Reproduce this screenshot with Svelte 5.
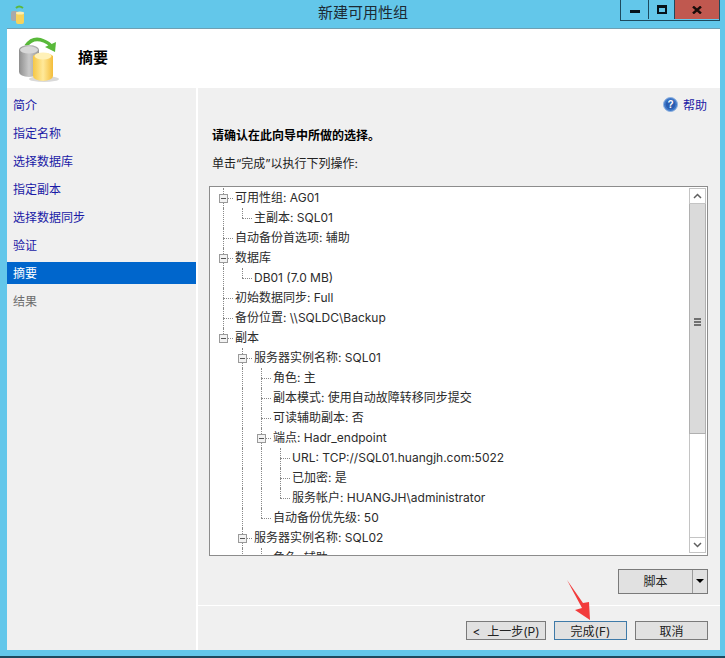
<script>
	const navItems = [
		{ label: '简介' },
		{ label: '指定名称' },
		{ label: '选择数据库' },
		{ label: '指定副本' },
		{ label: '选择数据同步' },
		{ label: '验证' },
		{ label: '摘要', active: true },
		{ label: '结果', disabled: true }
	];

	// depth = indent level, open = has a collapse box, guides = depths that keep a vertical line
	const rows = [
		{ depth: 0, open: true, text: '可用性组: AG01', guides: [0] },
		{ depth: 1, text: '主副本: SQL01', guides: [0], last: true },
		{ depth: 0, text: '自动备份首选项: 辅助', guides: [0] },
		{ depth: 0, open: true, text: '数据库', guides: [0] },
		{ depth: 1, text: 'DB01 (7.0 MB)', guides: [0], last: true },
		{ depth: 0, text: '初始数据同步: Full', guides: [0] },
		{ depth: 0, text: '备份位置: \\\\SQLDC\\Backup', guides: [0] },
		{ depth: 0, open: true, text: '副本', guides: [], last: true },
		{ depth: 1, open: true, text: '服务器实例名称: SQL01', guides: [1] },
		{ depth: 2, text: '角色: 主', guides: [1, 2] },
		{ depth: 2, text: '副本模式: 使用自动故障转移同步提交', guides: [1, 2] },
		{ depth: 2, text: '可读辅助副本: 否', guides: [1, 2] },
		{ depth: 2, open: true, text: '端点: Hadr_endpoint', guides: [1, 2] },
		{ depth: 3, text: 'URL: TCP://SQL01.huangjh.com:5022', guides: [1, 2, 3] },
		{ depth: 3, text: '已加密: 是', guides: [1, 2, 3] },
		{ depth: 3, text: '服务帐户: HUANGJH\\administrator', guides: [1, 2], last: true },
		{ depth: 2, text: '自动备份优先级: 50', guides: [1], last: true },
		{ depth: 1, open: true, text: '服务器实例名称: SQL02', guides: [1] },
		{ depth: 2, text: '角色: 辅助', guides: [1, 2] }
	];
</script>

<div class="window">
	<div class="titlebar">
		<svg class="app-icon" width="16" height="20" viewBox="0 0 16 20">
			<path d="M6 4 Q9 1 13 4" fill="none" stroke="#5cb83c" stroke-width="2" />
			<rect x="1" y="7" width="7" height="10" rx="2" fill="#a9a9a9" />
			<rect x="6" y="8" width="8" height="12" rx="2" fill="#f7d35c" />
			<ellipse cx="10" cy="9" rx="4" ry="1.5" fill="#fdeeb0" />
		</svg>
		<div class="title">新建可用性组</div>
		<div class="controls">
			<div class="ctl min"><span class="min-bar"></span></div>
			<div class="ctl max"><span class="max-box"></span></div>
			<div class="ctl close">
				<svg width="10" height="8" viewBox="0 0 10 8">
					<path d="M1 0.5 L9 7.5 M9 0.5 L1 7.5" stroke="#1a0c0a" stroke-width="2.4" fill="none" />
				</svg>
			</div>
		</div>
	</div>

	<div class="client">
		<div class="header">
			<svg class="hero" width="42" height="48" viewBox="0 0 42 48">
				<defs>
					<linearGradient id="grey" x1="0" x2="1" y1="0" y2="0">
						<stop offset="0" stop-color="#8e8e8e" />
						<stop offset="0.5" stop-color="#c9c9c9" />
						<stop offset="1" stop-color="#9a9a9a" />
					</linearGradient>
					<linearGradient id="gold" x1="0" x2="1" y1="0" y2="0">
						<stop offset="0" stop-color="#f6c745" />
						<stop offset="0.5" stop-color="#ffe99a" />
						<stop offset="1" stop-color="#f4bd3a" />
					</linearGradient>
				</defs>
				<path d="M7 10 Q14 0 25 5 Q30 7 32 10" fill="none" stroke="#59b93a" stroke-width="3.5" />
				<path d="M26 11 L37 6 L36 16 Z" fill="#59b93a" />
				<path d="M0 14 a10 5 0 0 1 20 0 V36 a10 5 0 0 1 -20 0 Z" fill="url(#grey)" />
				<ellipse cx="10" cy="14" rx="9" ry="3.5" fill="#d8d8d8" />
				<ellipse cx="25" cy="43" rx="15" ry="3" fill="#d9d9d9" />
				<path d="M14 20 a11 5 0 0 1 20 0 V40 a10 5 0 0 1 -20 0 Z" fill="url(#gold)" />
				<ellipse cx="24" cy="20" rx="8.5" ry="3.5" fill="#fff1b8" />
			</svg>
			<h1>摘要</h1>
		</div>

		<div class="body">
			<nav class="sidebar">
				{#each navItems as item}
					<div class="nav-item" class:active={item.active} class:disabled={item.disabled}>{item.label}</div>
				{/each}
			</nav>

			<main class="content">
				<div class="help-row">
					<svg width="15" height="15" viewBox="0 0 15 15">
						<circle cx="7.5" cy="7.5" r="7" fill="#3f78c8" stroke="#8fb2e0" />
						<circle cx="7.5" cy="7.5" r="4.8" fill="#2a5db0" />
						<text x="7.5" y="11" text-anchor="middle" class="q">?</text>
					</svg>
					<span class="help">帮助</span>
				</div>
				<p class="confirm">请确认在此向导中所做的选择。</p>
				<p class="hint">单击“完成”以执行下列操作:</p>

				<div class="tree-box">
					<div class="tree">
						{#each rows as row}
							<div class="row" style="--depth:{row.depth}">
								{#each row.guides as g}
									<span class="guide" style="--g:{g}"></span>
								{/each}
								{#if row.last}
									<span class="guide half" style="--g:{row.depth}"></span>
								{/if}
								<span class="tick"></span>
								{#if row.open}
									<span class="toggle"></span>
								{/if}
								<span class="label">{row.text}</span>
							</div>
						{/each}
					</div>
					<div class="scrollbar">
						<div class="arrow">
							<svg width="9" height="6" viewBox="0 0 9 6"><path d="M1 5 L4.5 1.5 L8 5" fill="none" stroke="#606060" stroke-width="1.5" /></svg>
						</div>
						<div class="thumb"><span class="grip"></span></div>
						<div class="track"></div>
						<div class="arrow">
							<svg width="9" height="6" viewBox="0 0 9 6"><path d="M1 1 L4.5 4.5 L8 1" fill="none" stroke="#606060" stroke-width="1.5" /></svg>
						</div>
					</div>
				</div>

				<div class="script-row">
					<div class="split">
						<span class="split-main">脚本</span>
						<span class="split-drop"></span>
					</div>
				</div>

				<div class="footer">
					<button class="btn prev">&lt;&nbsp; 上一步(P)</button>
					<button class="btn finish">完成(F)</button>
					<button class="btn cancel">取消</button>
				</div>

				<svg class="red-arrow" width="26" height="42" viewBox="0 0 26 42">
					<path d="M0 0 L16 23 L22 22 L23 40 L8 30 L15 28 Z" fill="#f23b3b" />
				</svg>
			</main>
		</div>
	</div>
</div>

<style>
	:global(body) {
		margin: 0;
		background: #63c7ea;
	}
	.window {
		width: 725px;
		height: 658px;
		background: #63c7ea;
		font-family: Inter, 'Noto Sans CJK SC', sans-serif;
		font-size: 12px;
		overflow: hidden;
		display: flex;
		flex-direction: column;
		position: relative;
		box-sizing: border-box;
		border-bottom: 2px solid #1d4a5e;
	}
	.titlebar {
		height: 29px;
		flex: none;
		display: flex;
		justify-content: center;
		position: relative;
	}
	.app-icon {
		position: absolute;
		left: 10px;
		top: 4px;
	}
	.title {
		font-size: 15px;
		line-height: 26px;
		color: #1c2a33;
		margin-right: -1px;
	}
	.controls {
		position: absolute;
		right: 5px;
		top: 0;
		display: flex;
		height: 20px;
		border: 1px solid #1d4a5e;
		border-top: none;
	}
	.ctl {
		display: flex;
		align-items: center;
		justify-content: center;
		height: 19px;
	}
	.min {
		width: 27px;
		border-right: 1px solid #1d4a5e;
	}
	.max {
		width: 25px;
		border-right: 1px solid #1d4a5e;
	}
	.close {
		width: 44px;
		background: #c0584f;
	}
	.min-bar {
		width: 10px;
		height: 3px;
		margin-top: 4px;
		background: #06121a;
	}
	.max-box {
		width: 6px;
		height: 4px;
		border: 2px solid #06121a;
		border-top-width: 3px;
	}
	.client {
		margin: 0 5px 6px 7px;
		flex: 1;
		min-height: 0;
		display: flex;
		flex-direction: column;
		background: #f0f0f0;
	}
	.header {
		height: 59px;
		flex: none;
		background: #fff;
		display: flex;
		align-items: center;
		box-shadow: 0 -1px 0 #6f9fb2;
	}
	.hero {
		margin-left: 12px;
		margin-top: 3px;
	}
	h1 {
		margin: 0 0 4px 17px;
		font-size: 15px;
		font-weight: 700;
		color: #000;
	}
	.body {
		flex: 1;
		display: flex;
		min-height: 0;
		background: #fff;
	}
	.sidebar {
		width: 189px;
		flex: none;
		padding-top: 6px;
		box-sizing: border-box;
		background: #f0f0f0;
	}
	.nav-item {
		height: 22px;
		margin-bottom: 6px;
		padding-left: 6px;
		line-height: 24px;
		color: #1a1aa6;
	}
	.nav-item.active {
		background: #0066cc;
		color: #fff;
	}
	.nav-item.disabled {
		color: #6d6d6d;
	}
	.content {
		margin-left: 2px;
		flex: 1;
		min-width: 0;
		display: flex;
		flex-direction: column;
		padding: 0 12px 0 11px;
		background: #f0f0f0;
		position: relative;
	}
	.help-row {
		display: flex;
		justify-content: flex-end;
		align-items: center;
		gap: 5px;
		height: 17px;
		margin-top: 8px;
		padding-right: 1px;
	}
	.q {
		fill: #fff;
		font-size: 10px;
		font-weight: 700;
		font-family: 'Liberation Sans', sans-serif;
	}
	.help {
		color: #1a1aa6;
	}
	.confirm {
		margin: 14px 0 0 3px;
		height: 18px;
		line-height: 18px;
		font-weight: 700;
		color: #000;
	}
	.hint {
		margin: 10px 0 0 3px;
		height: 18px;
		line-height: 18px;
		color: #222;
	}
	.tree-box {
		margin-top: 13px;
		height: 370px;
		flex: none;
		border: 1px solid #8c8c8c;
		background: #fff;
		display: flex;
		overflow: hidden;
		box-sizing: border-box;
	}
	.tree {
		flex: 1;
		min-width: 0;
		overflow: hidden;
		padding-top: 1px;
	}
	.row {
		height: 20px;
		line-height: 20px;
		position: relative;
		padding-left: calc(25px + var(--depth) * 19px);
		color: #2b2b2b;
		white-space: nowrap;
	}
	.guide {
		position: absolute;
		left: calc(13px + var(--g) * 19px);
		top: 0;
		bottom: 0;
		border-left: 1px dotted #8a8a8a;
	}
	.guide.half {
		bottom: 10px;
	}
	.tick {
		position: absolute;
		left: calc(13px + var(--depth) * 19px);
		top: 10px;
		width: 10px;
		border-top: 1px dotted #8a8a8a;
	}
	.toggle {
		position: absolute;
		left: calc(9px + var(--depth) * 19px);
		top: 6px;
		width: 7px;
		height: 7px;
		border: 1px solid #9a9a9a;
		background: linear-gradient(to right, #000 0, #555 0) no-repeat center / 5px 1px, #f2f2f2;
	}
	.scrollbar {
		width: 17px;
		flex: none;
		margin-right: 1px;
		display: flex;
		flex-direction: column;
		padding: 1px 0 2px;
		box-sizing: border-box;
		background: #fff;
	}
	.arrow {
		height: 16px;
		flex: none;
		background: #fff;
		display: flex;
		align-items: center;
		justify-content: center;
		border: 1px solid #c4c4c4;
		box-sizing: border-box;
	}
	.thumb {
		height: 230px;
		flex: none;
		background: #dadada;
		border: 1px solid #b0b0b0;
		border-top: none;
		box-sizing: border-box;
		display: flex;
		align-items: center;
		justify-content: center;
	}
	.grip {
		width: 7px;
		height: 4px;
		border-top: 2px solid #707070;
		border-bottom: 2px solid #707070;
		background: linear-gradient(#707070, #707070) no-repeat center / 100% 2px;
		margin-top: 6px;
	}
	.track {
		flex: 1;
		background: #fff;
		border-left: 1px solid #c4c4c4;
		border-right: 1px solid #c4c4c4;
	}
	.script-row {
		display: flex;
		justify-content: flex-end;
		margin-top: 13px;
	}
	.split {
		display: flex;
		width: 90px;
		height: 25px;
		border: 1px solid #7a7a7a;
		background: #e1e1e1;
		box-sizing: border-box;
	}
	.split-main {
		flex: 1;
		text-align: center;
		line-height: 23px;
		color: #222;
		border-right: 1px solid #9a9a9a;
	}
	.split-drop {
		width: 14px;
		flex: none;
		position: relative;
	}
	.split-drop::after {
		content: '';
		position: absolute;
		left: 3px;
		top: 9px;
		border-left: 4px solid transparent;
		border-right: 4px solid transparent;
		border-top: 4px solid #000;
	}
	.footer {
		margin: 11px -12px 0 -11px;
		padding: 15px 12px 0 0;
		border-top: 1px solid #fff;
		display: flex;
		justify-content: flex-end;
		gap: 8px;
	}
	.btn {
		height: 19px;
		width: 80px;
		padding: 0;
		font: inherit;
		line-height: 19px;
		color: #222;
		border: 1px solid #7a7a7a;
		background: #e1e1e1;
		overflow: hidden;
	}
	.finish {
		width: 73px;
		border-color: #3f7aa8;
	}
	.cancel {
		width: 73px;
	}
	.red-arrow {
		position: absolute;
		left: 369px;
		top: 492px;
	}
</style>
